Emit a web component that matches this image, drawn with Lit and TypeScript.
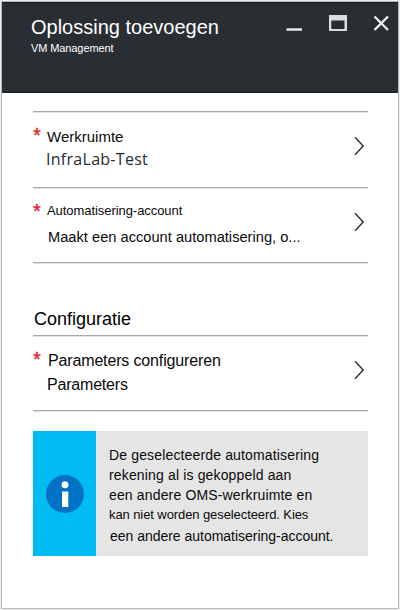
import { LitElement, html, css, svg } from "lit";
import { customElement, property } from "lit/decorators.js";

@customElement("blade-row")
class BladeRow extends LitElement {
  @property() kind = "";
  @property() label = "";
  @property() value = "";

  static styles = css`
    :host {
      display: block;
      box-sizing: border-box;
      border-bottom: 1px solid #a9a9a9;
      box-shadow: 0 1px 0 #e2e2e2;
    }
    .row {
      display: flex;
      height: 100%;
      color: #0a0a0a;
    }
    .star {
      width: 14px;
      flex: none;
      padding-top: 10px;
      font: 20px/26px "Liberation Sans", sans-serif;
      color: #e81123;
      -webkit-text-stroke: 0.3px #e81123;
    }
    .text {
      flex: 1;
      min-width: 0;
      white-space: nowrap;
    }
    .label,
    .value {
      line-height: 24px;
    }
    .workspace .label { font-size: 15px; padding-top: 13px; }
    .workspace .value {
      font: 16px/24px "Open Sans", "Noto Sans", sans-serif;
      letter-spacing: 0.28px;
      color: #252b31;
      margin: -2px 0 0 -1px;
    }
    .account .label { font-size: 13px; padding-top: 11px; letter-spacing: -0.06px; }
    .account .value { font-size: 14.67px; padding: 2px 0 0 1px; }
    .params .label { font-size: 16px; padding: 13px 0 0 1px; letter-spacing: -0.15px; }
    .params .value { font-size: 16px; letter-spacing: -0.2px; }
    .params .star { padding-top: 10px; }
    .chevron {
      flex: none;
      width: 14px;
      height: 22px;
      margin-top: 23px;
    }
  `;

  render() {
    return html`<div class="row ${this.kind}">
      <div class="star">*</div>
      <div class="text">
        <div class="label">${this.label}</div>
        <div class="value">${this.value}</div>
      </div>
      <svg class="chevron" viewBox="0 0 14 22">
        <path d="M1 2.3L9.2 11L1 19.7" fill="none" stroke="#2b2f38" stroke-width="1.4" />
      </svg>
    </div>`;
  }
}

@customElement("app-root")
class AppRoot extends LitElement {
  static styles = css`
    :host {
      display: block;
      box-sizing: border-box;
      width: 400px;
      height: 610px;
      padding: 1px;
      background: #ececec;
      font-family: "Liberation Sans", Arial, sans-serif;
    }
    .blade {
      box-sizing: border-box;
      height: 608px;
      border: 1px solid #b9b9b9;
      background: #fff;
    }
    header {
      box-sizing: border-box;
      display: flex;
      justify-content: space-between;
      height: 91px;
      padding: 11px 8px 0 29px;
      background: #292e32;
      border: solid #171c20;
      border-width: 1px 0;
      color: #fff;
      white-space: nowrap;
    }
    h1 {
      margin: 0;
      font: 20px/26px "Liberation Sans", Arial, sans-serif;
    }
    .subtitle {
      padding-top: 1px;
      font-size: 11px;
      line-height: 14px;
      letter-spacing: -0.1px;
    }
    .controls {
      width: 104px;
      height: 18px;
      margin-top: 1px;
    }
    main {
      padding: 18px 30px 0 31px;
    }
    .rule {
      height: 1px;
      background: #a9a9a9;
      box-shadow: 0 1px 0 #e2e2e2;
    }
    .first { height: 76px; }
    .second { height: 75px; }
    h2 {
      margin: 44px 0 4px 1px;
      font: 18px/24px "Liberation Sans", Arial, sans-serif;
      color: #000;
    }
    .info {
      display: flex;
      height: 125px;
      margin-top: 20px;
      background: #e5e5e5;
    }
    .badge {
      display: flex;
      align-items: center;
      justify-content: center;
      width: 63px;
      flex: none;
      background: #00bcf2;
    }
    .message {
      padding: 14px 0 0 13px;
      font-size: 14px;
      line-height: 20px;
      letter-spacing: 0.15px;
      color: #0a0a0a;
      white-space: nowrap;
    }
    .tight { font-size: 13px; letter-spacing: -0.09px; }
    .last { letter-spacing: -0.02px; padding: 1px 0 0 1px; }
  `;

  render() {
    return html`<div class="blade">
      <header>
        <div>
          <h1>Oplossing toevoegen</h1>
          <div class="subtitle">VM Management</div>
        </div>
        <svg class="controls" viewBox="286 15 104 18">
          ${svg`<path d="M286.5 29.5H302" stroke="#eee" stroke-width="2.4" />
          <path fill="#dcdcdc" fill-rule="evenodd" d="M329 15H347V31H329ZM331.3 20.5V29H344.5V20.5Z" />
          <path d="M374.5 16.5L388 30M388 16.5L374.5 30" stroke="#f2f2f2" stroke-width="2.3" />`}
        </svg>
      </header>
      <main>
        <div class="rule"></div>
        <blade-row class="first" kind="workspace" label="Werkruimte" value="InfraLab-Test"></blade-row>
        <blade-row class="second" kind="account" label="Automatisering-account" value="Maakt een account automatisering, o..."></blade-row>
        <h2>Configuratie</h2>
        <div class="rule"></div>
        <blade-row class="second" kind="params" label="Parameters configureren" value="Parameters"></blade-row>
        <div class="info">
          <div class="badge">
            <svg width="38" height="38" viewBox="0 0 38 38">
              <circle cx="19" cy="19" r="19" fill="#0072c6" />
              <circle cx="19" cy="9.8" r="3.5" fill="#fff" />
              <rect x="16" y="16.5" width="6.3" height="15.5" fill="#fff" />
            </svg>
          </div>
          <div class="message">
            <div>De geselecteerde automatisering</div>
            <div>rekening al is gekoppeld aan</div>
            <div>een andere OMS-werkruimte en</div>
            <div class="tight">kan niet worden geselecteerd. Kies</div>
            <div class="last">een andere automatisering-account.</div>
          </div>
        </div>
      </main>
    </div>`;
  }
}
